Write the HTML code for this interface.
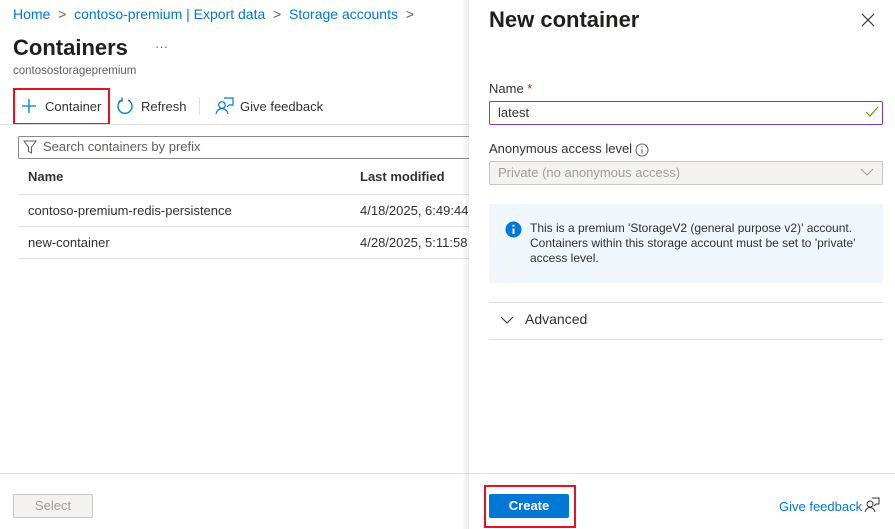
<!DOCTYPE html>
<html><head><style>
*{box-sizing:border-box;margin:0;padding:0}
body{width:895px;height:529px;overflow:hidden;background:#fff;font-family:"Segoe UI","Liberation Sans",sans-serif;color:#323130;position:relative;font-size:13px}
.a{position:absolute;white-space:nowrap}
</style></head><body>
<div class="a" style="left:13px;top:6px;font-size:14px;color:#0078d4">Home <span style="color:#605e5c">&nbsp;&gt;&nbsp;</span> contoso-premium | Export data <span style="color:#605e5c">&nbsp;&gt;&nbsp;</span> Storage accounts <span style="color:#605e5c">&nbsp;&gt;</span></div>
<div class="a" style="left:13px;top:35px;font-size:22px;font-weight:bold;color:#201f1e">Containers</div>
<div class="a" style="left:155px;top:39px;font-size:13px;color:#605e5c">···</div>
<div class="a" style="left:13px;top:65px;font-size:11.5px;color:#605e5c">contosostoragepremium</div>
<div class="a" style="left:13px;top:88px;width:97px;height:37px;border:2px solid #e81123"></div>
<svg class="a" style="left:21px;top:98px" width="16" height="16"><path d="M8 1v14M1 8h14" stroke="#0078d4" stroke-width="1.3"/></svg>
<div class="a" style="left:45px;top:99px;font-size:13px">Container</div>
<svg class="a" style="left:116px;top:97px" width="18" height="18"><path d="M6 3A7 7 0 1 0 12 3" fill="none" stroke="#0078d4" stroke-width="1.3"/><path d="M6 0.5v3.5h-3.5" fill="none" stroke="#0078d4" stroke-width="1.3"/></svg>
<div class="a" style="left:141px;top:99px;font-size:13px">Refresh</div>
<div class="a" style="left:199px;top:97px;width:1px;height:18px;background:#e1dfdd"></div>
<svg class="a" style="left:215px;top:97px" width="20" height="18"><circle cx="7" cy="8" r="3.3" fill="none" stroke="#0078d4" stroke-width="1.2"/><path d="M1 17c1-4 3-5.5 6-5.5s5 1.5 6 5.5M9 1h9v7h-4l-2 2" fill="none" stroke="#0078d4" stroke-width="1.2"/></svg>
<div class="a" style="left:240px;top:99px;font-size:13px">Give feedback</div>
<div class="a" style="left:0;top:124px;width:470px;height:1px;background:#e1dfdd"></div>
<div class="a" style="left:18px;top:136px;width:460px;height:23px;border:1px solid #8a8886;border-radius:2px"></div>
<svg class="a" style="left:23px;top:139px" width="14" height="16"><path d="M1 2h12l-4.5 6v6l-3-1.5V8z" fill="none" stroke="#605e5c" stroke-width="1"/></svg>
<div class="a" style="left:43px;top:139px;font-size:13px;color:#605e5c">Search containers by prefix</div>
<div class="a" style="left:28px;top:169px;font-size:13px;font-weight:bold">Name</div>
<div class="a" style="left:360px;top:169px;font-size:13px;font-weight:bold">Last modified</div>
<div class="a" style="left:18px;top:194px;width:452px;height:1px;background:#e1dfdd"></div>
<div class="a" style="left:28px;top:203px">contoso-premium-redis-persistence</div>
<div class="a" style="left:360px;top:203px">4/18/2025, 6:49:44</div>
<div class="a" style="left:18px;top:226px;width:452px;height:1px;background:#e1dfdd"></div>
<div class="a" style="left:28px;top:235px">new-container</div>
<div class="a" style="left:360px;top:235px">4/28/2025, 5:11:58</div>
<div class="a" style="left:18px;top:258px;width:452px;height:1px;background:#e1dfdd"></div>
<div class="a" style="left:0;top:473px;width:895px;height:1px;background:#e1dfdd"></div>
<div class="a" style="left:13px;top:494px;width:80px;height:24px;border:1px solid #c8c6c4;background:#f3f2f1;border-radius:2px;color:#a19f9d;text-align:center;line-height:22px">Select</div>

<div class="a" style="left:462px;top:0;width:7px;height:529px;background:linear-gradient(to right,rgba(0,0,0,0),rgba(0,0,0,0.08))"></div>
<div class="a" style="left:469px;top:0;width:426px;height:473px;background:#fff"></div>
<div class="a" style="left:469px;top:474px;width:426px;height:55px;background:#fff"></div>
<div class="a" style="left:469px;top:473px;width:426px;height:1px;background:#e1dfdd"></div>
<div class="a" style="left:489px;top:7px;font-size:22px;font-weight:bold;color:#201f1e">New container</div>
<svg class="a" style="left:861px;top:13px" width="14" height="14"><path d="M1 1l12 12M13 1L1 13" stroke="#323130" stroke-width="1.2"/></svg>
<div class="a" style="left:489px;top:81px">Name <span style="color:#a4262c">*</span></div>
<div class="a" style="left:489px;top:101px;width:394px;height:24px;border:1px solid #8a3aa8;border-radius:2px"></div>
<div class="a" style="left:498px;top:105px">latest</div>
<svg class="a" style="left:865px;top:106px" width="14" height="12"><path d="M1 6l4 4l8-9" fill="none" stroke="#57a300" stroke-width="1.2"/></svg>
<div class="a" style="left:489px;top:141px">Anonymous access level</div>
<svg class="a" style="left:635px;top:143px" width="14" height="14"><circle cx="7" cy="7" r="6" fill="none" stroke="#605e5c"/><path d="M7 6v4.5" stroke="#605e5c"/><circle cx="7" cy="4" r=".7" fill="#605e5c"/></svg>
<div class="a" style="left:489px;top:161px;width:394px;height:24px;border:1px solid #c8c6c4;background:#f3f2f1;border-radius:2px"></div>
<div class="a" style="left:498px;top:165px;color:#a19f9d">Private (no anonymous access)</div>
<svg class="a" style="left:860px;top:168px" width="14" height="9"><path d="M1 1l6 6l6-6" fill="none" stroke="#a19f9d" stroke-width="1"/></svg>
<div class="a" style="left:489px;top:204px;width:394px;height:79px;background:#eff6fc"></div>
<svg class="a" style="left:505px;top:221px" width="17" height="17"><circle cx="8.5" cy="8.5" r="8" fill="#0078d4"/><path d="M8.5 7.5v5.5" stroke="#fff" stroke-width="2"/><circle cx="8.5" cy="4.7" r="1.1" fill="#fff"/></svg>
<div class="a" style="left:530px;top:221px;font-size:12px;line-height:15px;color:#323130">This is a premium 'StorageV2 (general purpose v2)' account.<br>Containers within this storage account must be set to 'private'<br>access level.</div>
<div class="a" style="left:489px;top:302px;width:394px;height:1px;background:#e1dfdd"></div>
<svg class="a" style="left:500px;top:316px" width="14" height="9"><path d="M1 1l6 6l6-6" fill="none" stroke="#323130" stroke-width="1"/></svg>
<div class="a" style="left:525px;top:311px;font-size:14px">Advanced</div>
<div class="a" style="left:489px;top:339px;width:394px;height:1px;background:#e1dfdd"></div>
<div class="a" style="left:484px;top:485px;width:92px;height:43px;border:2px solid #e81123"></div>
<div class="a" style="left:489px;top:494px;width:80px;height:24px;background:#0078d4;border-radius:2px;color:#fff;font-weight:bold;text-align:center;line-height:23px">Create</div>
<div class="a" style="left:779px;top:499px;color:#0078d4">Give feedback</div>
<svg class="a" style="left:864px;top:497px" width="16" height="16"><circle cx="6" cy="7" r="3" fill="none" stroke="#323130"/><path d="M1 15c1-3 2.5-4.5 5-4.5s4 1.5 5 4.5M8 1h7v6h-3l-2 2" fill="none" stroke="#323130"/></svg>
</body></html>
